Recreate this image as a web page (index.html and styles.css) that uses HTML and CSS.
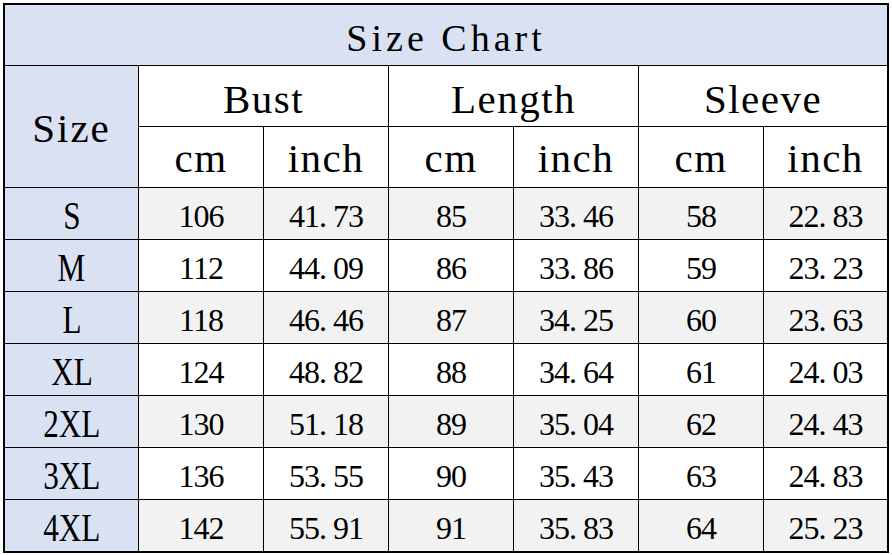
FILE: index.html
```html
<!DOCTYPE html>
<html lang="en">
<head>
<meta charset="utf-8">
<title>Size Chart</title>
<link rel="stylesheet" href="styles.css">
</head>
<body>
<table class="chart">
  <colgroup>
    <col class="c-size">
    <col class="c-val"><col class="c-val"><col class="c-val"><col class="c-val"><col class="c-val">
    <col class="c-last">
  </colgroup>
  <tr class="title-row"><td colspan="7" class="title">Size Chart</td></tr>
  <tr class="head-row">
    <td rowspan="2" class="size-head">Size</td>
    <td colspan="2" class="group">Bust</td>
    <td colspan="2" class="group">Length</td>
    <td colspan="2" class="group">Sleeve</td>
  </tr>
  <tr class="head-row">
    <td class="unit">cm</td><td class="unit">inch</td>
    <td class="unit">cm</td><td class="unit">inch</td>
    <td class="unit">cm</td><td class="unit">inch</td>
  </tr>
  <tr class="row odd">
    <td class="sz"><span class="szt">S</span></td>
    <td>106</td><td>41<span class="dot">.</span>73</td><td>85</td><td>33<span class="dot">.</span>46</td><td>58</td><td>22<span class="dot">.</span>83</td>
  </tr>
  <tr class="row">
    <td class="sz"><span class="szt">M</span></td>
    <td>112</td><td>44<span class="dot">.</span>09</td><td>86</td><td>33<span class="dot">.</span>86</td><td>59</td><td>23<span class="dot">.</span>23</td>
  </tr>
  <tr class="row odd">
    <td class="sz"><span class="szt">L</span></td>
    <td>118</td><td>46<span class="dot">.</span>46</td><td>87</td><td>34<span class="dot">.</span>25</td><td>60</td><td>23<span class="dot">.</span>63</td>
  </tr>
  <tr class="row">
    <td class="sz"><span class="szt">XL</span></td>
    <td>124</td><td>48<span class="dot">.</span>82</td><td>88</td><td>34<span class="dot">.</span>64</td><td>61</td><td>24<span class="dot">.</span>03</td>
  </tr>
  <tr class="row odd">
    <td class="sz"><span class="szt">2XL</span></td>
    <td>130</td><td>51<span class="dot">.</span>18</td><td>89</td><td>35<span class="dot">.</span>04</td><td>62</td><td>24<span class="dot">.</span>43</td>
  </tr>
  <tr class="row">
    <td class="sz"><span class="szt">3XL</span></td>
    <td>136</td><td>53<span class="dot">.</span>55</td><td>90</td><td>35<span class="dot">.</span>43</td><td>63</td><td>24<span class="dot">.</span>83</td>
  </tr>
  <tr class="row odd last">
    <td class="sz"><span class="szt">4XL</span></td>
    <td>142</td><td>55<span class="dot">.</span>91</td><td>91</td><td>35<span class="dot">.</span>83</td><td>64</td><td>25<span class="dot">.</span>23</td>
  </tr>
</table>
</body>
</html>
```
FILE: styles.css
```css
html, body {
  margin: 0;
  padding: 0;
  background: #ffffff;
}

body {
  padding: 3px 0 0 3px;
  font-family: "Liberation Serif", "Times New Roman", serif;
  color: #000000;
}

.chart {
  table-layout: fixed;
  width: 886px;
  border-collapse: separate;
  border-spacing: 0;
  border: 2px solid #000000;
}

.c-size { width: 134px; }
.c-val { width: 125px; }
.c-last { width: 123px; }

.chart td {
  padding: 0;
  text-align: center;
  vertical-align: middle;
  line-height: 1;
  border-right: 1px solid #000000;
  border-bottom: 1px solid #000000;
  white-space: nowrap;
  overflow: hidden;
}

.chart td:last-child {
  border-right: none;
}

.chart .last td {
  border-bottom: none;
}

.title {
  height: 55px;
  padding-top: 5px !important;
  background: #d9e1f2;
  font-size: 38px;
  letter-spacing: 4px;
}

.size-head {
  background: #d9e1f2;
  font-size: 41px;
  letter-spacing: 2px;
  padding-top: 4px !important;
}

.group {
  height: 53px;
  padding-top: 7px !important;
  font-size: 41px;
  letter-spacing: 1.5px;
}

.unit {
  height: 58px;
  padding-top: 2px !important;
  font-size: 41px;
  letter-spacing: 1.5px;
}

.row td {
  height: 46px;
  padding-top: 5px !important;
  font-size: 32px;
  letter-spacing: -1px;
  background: #ffffff;
}

.row.odd td {
  background: #f2f2f2;
}

.row td.sz {
  height: 47px;
  padding-top: 4px !important;
  background: #d9e1f2;
  font-size: 39px;
  letter-spacing: 0;
}

.szt {
  display: inline-block;
  transform: scaleX(0.8);
}

.dot {
  padding-right: 7px;
}
```
